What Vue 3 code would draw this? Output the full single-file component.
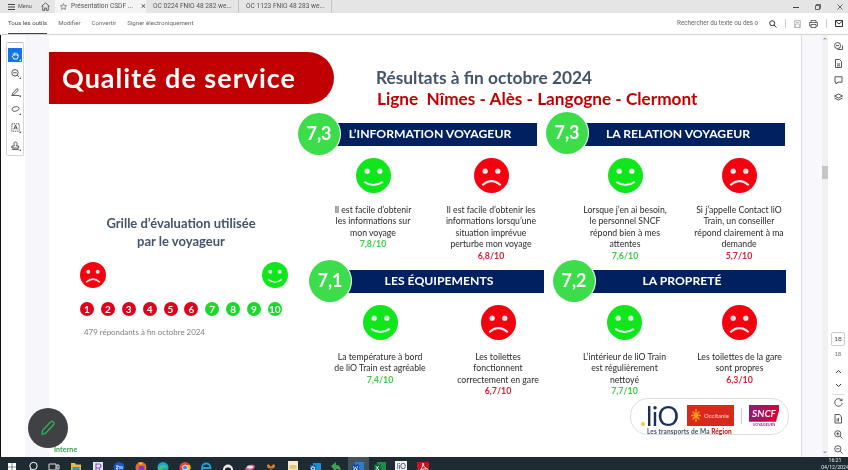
<script setup>
const scale = [1,2,3,4,5,6,7,8,9,10]
const sections = [
  { id: 's1', score: '7,3', title: 'L’INFORMATION VOYAGEUR', cards: [
    { mood: 'happy', lines: ['Il est facile d’obtenir','les informations sur','mon voyage'], note: '7,8/10' },
    { mood: 'sad', lines: ['Il est facile d’obtenir les','informations lorsqu’une','situation imprévue','perturbe mon voyage'], note: '6,8/10' } ] },
  { id: 's2', score: '7,3', title: 'LA RELATION VOYAGEUR', cards: [
    { mood: 'happy', lines: ['Lorsque j’en ai besoin,','le personnel SNCF','répond bien à mes','attentes'], note: '7,6/10' },
    { mood: 'sad', lines: ['Si j’appelle Contact liO','Train, un conseiller','répond clairement à ma','demande'], note: '5,7/10' } ] },
  { id: 's3', score: '7,1', title: 'LES ÉQUIPEMENTS', cards: [
    { mood: 'happy', lines: ['La température à bord','de liO Train est agréable'], note: '7,4/10' },
    { mood: 'sad', lines: ['Les toilettes','fonctionnent','correctement en gare'], note: '6,7/10' } ] },
  { id: 's4', score: '7,2', title: 'LA PROPRETÉ', cards: [
    { mood: 'happy', lines: ['L’intérieur de liO Train','est régulièrement','nettoyé'], note: '7,7/10' },
    { mood: 'sad', lines: ['Les toilettes de la gare','sont propres'], note: '6,3/10' } ] }
]
const leftTools = ['hand','zoom','pen','lasso','text','stamp']
</script>

<template>
  <div class="screen">
    <svg class="defs" width="0" height="0" aria-hidden="true">
      <symbol id="happy" viewBox="0 0 36 36">
        <circle cx="18" cy="18" r="18" fill="#10e61c"/>
        <circle cx="11.5" cy="13.5" r="2.7" fill="#e4fbe6"/>
        <circle cx="24.5" cy="13.5" r="2.7" fill="#e4fbe6"/>
        <path d="M8.5 24.5Q18 31 27.5 24.5" fill="none" stroke="#e4fbe6" stroke-width="2.1"/>
      </symbol>
      <symbol id="sad" viewBox="0 0 36 36">
        <circle cx="18" cy="18" r="18" fill="#f5000f"/>
        <circle cx="11.5" cy="13.5" r="2.7" fill="#fde6e6"/>
        <circle cx="24.5" cy="13.5" r="2.7" fill="#fde6e6"/>
        <path d="M8.5 28Q18 19.5 27.5 28" fill="none" stroke="#fde6e6" stroke-width="2.1"/>
      </symbol>
    </svg>

    <header class="tabbar">
      <div class="menu">
        <svg width="7" height="6" viewBox="0 0 7 6"><path d="M0 .5h7M0 3h7M0 5.5h7" stroke="#444" fill="none"/></svg>
        <span>Menu</span>
      </div>
      <svg class="home" width="9" height="9" viewBox="0 0 9 9"><path d="M.5 4.5 4.5.8l4 3.7M1.7 3.8V8.4h2V6h1.6v2.4h2V3.8" fill="none" stroke="#444" stroke-width=".8"/></svg>
      <div class="tab active">
        <svg width="7" height="7" viewBox="0 0 10 10"><path d="M5 .8 6.3 3.7l3.1.3-2.3 2.1.7 3.1L5 7.6 2.2 9.2l.7-3.1L.6 4l3.1-.3z" fill="none" stroke="#555" stroke-width=".9"/></svg>
        <span class="tab-name">Présentation CSDF ...</span>
        <span class="tab-x">×</span>
      </div>
      <div class="tab">OC 0224 FNIO 48 282 we...</div>
      <div class="tab">OC 1123 FNIO 48 283 we...</div>
      <div class="win">
        <svg width="6" height="6" viewBox="0 0 6 6"><path d="M0 3.5h6" stroke="#444"/></svg>
        <svg width="6" height="6" viewBox="0 0 6 6"><path d="M.5 1.5h4v4h-4zM1.5 1.5V.5h4v4h-1" fill="none" stroke="#444" stroke-width=".8"/></svg>
        <svg width="6" height="6" viewBox="0 0 6 6"><path d="m.5.5 5 5m0-5-5 5" stroke="#444" stroke-width=".8"/></svg>
      </div>
    </header>

    <nav class="toolbar">
      <span class="tool-link current">Tous les outils</span>
      <span class="tool-link">Modifier</span>
      <span class="tool-link">Convertir</span>
      <span class="tool-link">Signer électroniquement</span>
      <div class="tool-right">
        <span class="search">Rechercher du texte ou des o</span>
        <svg width="8" height="8" viewBox="0 0 8 8"><circle cx="3.2" cy="3.2" r="2.5" fill="none" stroke="#333"/><path d="m5 5 2.5 2.5" stroke="#333"/></svg>
        <i class="sep"></i>
        <svg width="7" height="8" viewBox="0 0 7 8"><path d="M.5.5h6v7h-6zM1.5 4h4v3.5h-4zM2 .5v2h3v-2" fill="none" stroke="#aaa" stroke-width=".7"/></svg>
        <svg width="9" height="8" viewBox="0 0 9 8"><path d="M2 2.5V.5h5v2M2 6H.5V2.5h8V6H7M2 4.5h5v3H2z" fill="none" stroke="#444" stroke-width=".8"/></svg>
        <i class="sep"></i>
        <svg width="8" height="7" viewBox="0 0 8 7"><path d="M.5.5h7v6h-7zM.5 1l3.5 3 3.5-3" fill="none" stroke="#333"/></svg>
      </div>
    </nav>

    <div class="main">
      <aside class="left-rail">
        <div class="tool-strip">
          <span v-for="t in leftTools" :key="t" class="lt" :class="{ on: t === 'hand' }">
            <svg width="9" height="9" viewBox="0 0 9 9" fill="none" :stroke="t === 'hand' ? '#fff' : '#444'" stroke-width=".9">
              <path v-if="t === 'hand'" d="M2.2 5V2.6m1.4 2V1.6m1.4 3V1.6m1.4 3.2V2.6M1.2 5l1.6 3h3.4l1-2.5V3.6"/>
              <template v-else-if="t === 'zoom'"><circle cx="4" cy="3.8" r="3.2"/><path d="M2.2 3.8h3.6M6.2 6.2 8 8"/></template>
              <path v-else-if="t === 'pen'" d="m1.5 6.5 4.5-5 1.4 1.3-4.6 5H1.3zM.5 8.6h8"/>
              <path v-else-if="t === 'lasso'" d="M1 4c0-2 6-3.500 7-1 .6 2-3 3.500-5 3.300C1.500 6 1 5 1 4z"/>
              <template v-else-if="t === 'text'"><path d="M.8.8h7.400v7.400H.8z" stroke-dasharray="1.2 .8"/><path d="m2.800 6.500 1.700-4.500 1.700 4.500M3.500 5h2"/></template>
              <path v-else d="M3 3.500a1.700 1.700 0 1 1 3 0l-.4 1.500h2v2H.9V5h2.500zM.9 8.400h7"/>
            </svg>
            <b></b>
          </span>
        </div>
      </aside>

      <main class="slide">
        <div class="slide-head">
          <div class="banner">Qualité de service</div>
          <div class="headline">
            <h2>Résultats à fin octobre 2024</h2>
            <h1>Ligne&nbsp; Nîmes - Alès - Langogne - Clermont</h1>
          </div>
        </div>

        <div class="slide-body">
          <section class="legend">
            <h3>Grille d’évaluation utilisée<br>par le voyageur</h3>
            <div class="legend-faces">
              <svg width="26" height="26"><use href="#sad"/></svg>
              <svg width="26" height="26"><use href="#happy"/></svg>
            </div>
            <div class="legend-scale">
              <span v-for="n in scale" :key="n" class="num" :class="n > 6 ? 'good' : 'bad'">{{ n }}</span>
            </div>
            <p class="respondents">479 répondants à fin octobre 2024</p>
          </section>

          <div class="results">
            <section v-for="s in sections" :key="s.id" class="block" :class="s.id">
              <div class="block-head">
                <span class="score">{{ s.score }}</span>
                <h4>{{ s.title }}</h4>
              </div>
              <div class="cards">
                <article v-for="c in s.cards" :key="c.note" class="card">
                  <svg width="35" height="35"><use :href="'#' + c.mood"/></svg>
                  <p class="desc"><span v-for="l in c.lines" :key="l">{{ l }}</span></p>
                  <strong :class="c.mood">{{ c.note }}</strong>
                </article>
              </div>
              <div v-if="s.id === 's4'" class="brand">
                <div class="brand-row">
                  <span class="lio"><i></i>liO</span>
                  <span class="occitanie">
                    <svg width="12" height="15" viewBox="0 0 12 15"><path d="M6 1v13M1 7.500h10M2.500 3.500l7 8m0-8-7 8" stroke="#f7a11a" stroke-width="1.300"/></svg>
                    <em>Occitanie</em>
                  </span>
                  <i class="brand-sep"></i>
                  <span class="sncf"><b>SNCF</b><small>VOYAGEURS</small></span>
                </div>
                <p class="brand-line">Les transports de Ma <span>Région</span></p>
              </div>
            </section>
          </div>
        </div>
        <div class="tag">Interne</div>
      </main>

      <aside class="side-rail">
        <div class="scrollbar">
          <span class="arrow">⌃</span>
          <i class="thumb"></i>
          <span class="arrow down">⌄</span>
        </div>
      </aside>

      <aside class="right-tools">
        <div class="rt-top">
          <svg width="9" height="9" viewBox="0 0 9 9" fill="none" stroke="#444" stroke-width=".9"><circle cx="3.600" cy="3.600" r="3"/><path d="M2 3.600h3M3.500 7.500h5v-4"/></svg>
          <svg width="9" height="9" viewBox="0 0 9 9" fill="none" stroke="#444" stroke-width=".9"><path d="M1.500.5h4l2 2v6h-6zM3 5h3M3 6.800h3"/></svg>
          <svg width="9" height="9" viewBox="0 0 9 9" fill="none" stroke="#444" stroke-width=".9"><path d="M1 .8h7v5.400H4L2 8V6.200H1z"/></svg>
          <svg width="9" height="9" viewBox="0 0 9 9" fill="none" stroke="#444" stroke-width=".9"><path d="M4.500 1 8.500 3l-4 2-4-2zM.5 5l4 2 4-2"/></svg>
        </div>
        <div class="rt-bottom">
          <span class="page">18</span>
          <span class="page-total">18</span>
          <svg class="up" width="7" height="5" viewBox="0 0 7 5"><path d="m1 4 2.500-2.500L6 4" fill="none" stroke="#333"/></svg>
          <svg class="dn" width="7" height="5" viewBox="0 0 7 5"><path d="m1 1 2.500 2.500L6 1" fill="none" stroke="#333"/></svg>
          <i class="rt-sep"></i>
          <svg class="rot" width="9" height="9" viewBox="0 0 9 9"><path d="M7.800 2.500A3.800 3.800 0 1 0 8.300 5M8 .5v2.200H5.800" fill="none" stroke="#333" stroke-width=".8"/></svg>
          <svg class="pg" width="9" height="10" viewBox="0 0 9 10"><path d="M1 .5h4.500L7.500 3v6H1zM3 4.500v3M4.500 4v3.500" fill="none" stroke="#333" stroke-width=".8"/></svg>
          <svg class="zi" width="9" height="9" viewBox="0 0 9 9"><circle cx="3.800" cy="3.800" r="3.100" fill="none" stroke="#333" stroke-width=".8"/><path d="M2.200 3.800h3.200M3.800 2.200v3.200M6.200 6.200 8.500 8.500" stroke="#333" stroke-width=".8"/></svg>
          <svg class="zo" width="9" height="9" viewBox="0 0 9 9"><circle cx="3.800" cy="3.800" r="3.100" fill="none" stroke="#333" stroke-width=".8"/><path d="M2.200 3.800h3.200M6.200 6.200 8.500 8.500" stroke="#333" stroke-width=".8"/></svg>
        </div>
      </aside>
    </div>

    <footer class="taskbar">
      <div class="task-icons">
        <svg width="10" height="10" viewBox="0 0 10 10"><path d="M1 2h3.700v3.700H1zM5.300 2H9v3.700H5.300zM1 6.300h3.700V10H1zM5.300 6.300H9V10H5.300z" fill="#fff"/></svg>
        <svg width="12" height="12" viewBox="0 0 12 12"><circle cx="6.500" cy="5" r="3.700" fill="none" stroke="#fff"/><path d="M4 8 1.500 11" stroke="#fff"/></svg>
        <svg width="12" height="12" viewBox="0 0 12 12"><path d="M1 3h7v6H1zM9 4h2v4H9z" fill="none" stroke="#ddd"/></svg>
        <svg width="12" height="12" viewBox="0 0 12 12"><path d="M1 2h4l1 1.500h5V12H1z" fill="#e9b949"/><path d="M2.500 6h7v6h-7z" fill="#4a90c2"/></svg>
        <svg width="12" height="12" viewBox="0 0 12 12"><path d="M1 1h10v11H1z" fill="#e6e4f5"/><path d="M4 3h3a2 2 0 0 1 0 4H4zm0 4v4m3-4 2 4" fill="none" stroke="#8254c8" stroke-width="1.200"/></svg>
        <svg width="12" height="12" viewBox="0 0 12 12"><circle cx="6" cy="6.500" r="5.500" fill="#1658c9"/><path d="M3 5h2.500L3 8h2.500M7 8V5m2 3V5" stroke="#fff" stroke-width=".9" fill="none"/></svg>
        <svg width="12" height="12" viewBox="0 0 12 12"><circle cx="6" cy="6.500" r="5.500" fill="#e8692a"/><circle cx="6.500" cy="7.500" r="2.800" fill="#7a3cc8"/><path d="M3 1.500 6 4 8 1.500" fill="#f7c32b"/></svg>
        <svg width="12" height="12" viewBox="0 0 12 12"><circle cx="6" cy="6.500" r="5.500" fill="#1b9dd9"/><path d="M1 8c1-5 8-6 10-1H5c0 2.500 3 3.500 5 2.500-3 3-8 2-9-1.500z" fill="#39c67c"/></svg>
        <svg width="12" height="12" viewBox="0 0 12 12"><circle cx="6" cy="6.500" r="5.500" fill="#e94335"/><path d="M6 6.500 1.500 9A5.500 5.500 0 0 0 8 11.600z" fill="#33a853"/><path d="M6 6.500 8 11.600A5.500 5.500 0 0 0 11 4H6z" fill="#fbbc04"/><circle cx="6" cy="6.500" r="2.400" fill="#4285f4" stroke="#fff" stroke-width=".8"/></svg>
        <svg width="12" height="12" viewBox="0 0 12 12"><path d="M2.500 7h8C10.500 1 2 1 2 7s6 6 8.500 3" fill="none" stroke="#1fa0e3" stroke-width="1.800"/></svg>
        <svg width="12" height="12" viewBox="0 0 12 12"><path d="M1 12V8c1-6 9-6 10 0v4z" fill="#e8e8e8"/><path d="M3 8c1-2 5-2 6 0v4H3z" fill="#222"/></svg>
        <svg width="12" height="12" viewBox="0 0 12 12"><path d="M1 8c2-5 8-5 10-3-1 4-6 7-10 3z" fill="#e05a84"/><ellipse cx="6" cy="6" rx="3" ry="1.500" fill="#dfe6f5"/></svg>
        <svg width="12" height="12" viewBox="0 0 12 12"><path d="M6 6C4 2 2 3 2 5s2 3 4 2c-1 2-2 4 0 5 2-1 1-3 0-5 2 1 4 0 4-2s-2-3-4 1z" fill="#e57a1f"/></svg>
        <svg width="12" height="12" viewBox="0 0 12 12"><path d="M1 0h10v12H1z" fill="#f4ecd0"/><path d="M2.500 5h7M2.500 7h7" stroke="#d4a52b"/></svg>
        <svg width="12" height="12" viewBox="0 0 12 12"><path d="M4 2h8v10H4z" fill="#1b8fd6"/><path d="M1 4h6v7H1z" fill="#0f5fa8"/><circle cx="4" cy="7.500" r="1.700" fill="none" stroke="#fff"/></svg>
        <svg width="12" height="12" viewBox="0 0 12 12"><path d="M1 5 6 1v3c4 0 5 3 5 8-1-3-2-4-5-4v3z" fill="#3fa34d"/></svg>
        <span class="word"><svg width="12" height="12" viewBox="0 0 12 12"><path d="M3 1h9v11H3z" fill="#2b7cd3"/><path d="M0 3.500h7v7H0z" fill="#164f99"/><path d="m1.500 5 .8 4 1.200-3 1.200 3 .8-4" stroke="#fff" stroke-width=".6" fill="none"/></svg></span>
        <svg width="12" height="12" viewBox="0 0 12 12"><path d="M3 1h9v11H3z" fill="#1f8a50"/><path d="M0 3.500h7v7H0z" fill="#0f6a38"/><path d="m1.800 5 3 4m0-4-3 4" stroke="#fff" stroke-width=".8"/></svg>
        <span class="lio-app">liO</span>
        <svg width="12" height="12" viewBox="0 0 12 12"><path d="M0 1h12v11H0z" fill="#c8141e"/><path d="M2 10c3-2 4-5 4-8 0 3 2 5 4.500 6-3-.5-6 0-8.500 2z" fill="none" stroke="#fff" stroke-width=".9"/></svg>
      </div>
      <div class="clock"><span>16:21</span><span>04/12/2024</span></div>
    </footer>

    <button class="fab" type="button" aria-label="Annoter">
      <svg width="18" height="18" viewBox="0 0 18 18"><path d="M3.500 11.500 11.500 3a2 2 0 0 1 3 2.800L6.500 14.300l-3.300.8z" fill="none" stroke="#2fb457" stroke-width="1.300"/></svg>
    </button>
  </div>
</template>

<style scoped>
.screen { position: relative; width: 848px; height: 470px; overflow: hidden; display: flex; flex-direction: column; background: #fff; font-family: "Lato", "Liberation Sans", sans-serif; color: #333; filter: blur(.3px); }
.defs { position: absolute; }
p, h1, h2, h3, h4 { margin: 0; }

.tabbar { height: 13px; flex: none; display: flex; align-items: center; background: #e5e5e5; font: 6.600px/13px "Roboto", sans-serif; color: #555; }
.menu { width: 38px; padding-left: 8px; display: flex; align-items: center; gap: 3px; box-sizing: border-box; font-size: 5.500px; }
.home { margin: 0 5px 0 3px; }
.tab { width: 93px; padding-left: 7px; box-sizing: border-box; border-right: 1px solid #c4c4c4; white-space: nowrap; overflow: hidden; }
.tab.active { width: 91px; padding-left: 5px; margin-right: 0; background: #f4f4f4; display: flex; align-items: center; gap: 4px; border: 0; }
.tab-name { flex: none; width: 66px; white-space: nowrap; }
.tab-x { font-size: 9px; }
.win { margin-left: auto; padding-right: 5px; display: flex; gap: 16px; }

.toolbar { height: 21px; flex: none; display: flex; align-items: stretch; padding-left: 8px; border-bottom: 1px solid #d2d2d2; font: 6.100px/19px "Roboto", sans-serif; color: #666; gap: 11px; box-sizing: content-box; }
.tool-link { box-sizing: border-box; height: 21px; white-space: nowrap; }
.tool-link.current { border-bottom: 1px solid #444; color: #444; }
.tool-right { margin-left: auto; padding-right: 5px; display: flex; align-items: center; gap: 8px; }
.search { margin-right: 1px; width: 83px; font-size: 6.300px; white-space: nowrap; }
.sep { width: 1px; height: 9px; background: #ccc; }

.main { flex: 1; min-height: 0; display: flex; }
.left-rail { width: 49px; flex: none; box-sizing: border-box; border-left: 1px solid #111; background: linear-gradient(90deg, #fff 0 24px, #f7f6fa 24px); padding: 7px 0 0 5px; }
.tool-strip { width: 18px; box-sizing: border-box; padding: 5px 1px 3px; border: 1px solid #d6d6d6; border-top-color: #bbb; background: #fff; border-radius: 2px; display: flex; flex-direction: column; gap: 4px; }
.lt { position: relative; height: 14px; display: flex; align-items: center; justify-content: center; }
.lt.on { background: #1473e6; }
.lt b { position: absolute; right: 1px; bottom: 1px; border-left: 2px solid transparent; border-bottom: 2px solid #555; }
.lt.on b { border-bottom-color: #fff; }

.slide { width: 752px; flex: none; position: relative; display: flex; flex-direction: column; background: #fff; }
.slide-head { display: flex; height: 77px; padding-top: 17px; box-sizing: border-box; }
.banner { width: 285px; height: 52px; flex: none; box-sizing: border-box; padding: 9px 0 0 13px; background: #c00000; border-radius: 0 26px 26px 0; color: #fff; font-size: 27px; line-height: 34px; font-weight: 700; letter-spacing: 1px; white-space: nowrap; }
.headline { margin-left: 42px; padding-top: 16px; white-space: nowrap; }
.headline h2 { font-size: 17.300px; line-height: 20px; color: #44546a; font-weight: 700; }
.headline h1 { margin: 0 0 0 1px; font-size: 17.200px; line-height: 22px; color: #c00000; font-weight: 700; }

.slide-body { display: flex; height: 334px; }
.legend { width: 249px; flex: none; padding-left: 31px; box-sizing: border-box; }
.legend h3 { width: 202px; margin-top: 102px; text-align: center; font-size: 13px; line-height: 18px; font-weight: 700; color: #44546a; white-space: nowrap; }
.legend-faces { width: 208px; margin-top: 12px; display: flex; justify-content: space-between; }
.legend-faces svg { display: block; }
.legend-scale { width: 202px; margin-top: 14px; display: flex; justify-content: space-between; }
.num { width: 14px; height: 14px; border-radius: 50%; color: #fff; font-size: 10px; line-height: 14px; font-weight: 700; text-align: center; }
.num.bad { background: #e0001a; }
.num.good { background: #19d92b; }
.respondents { margin: 11px 0 0 4px; font-size: 7.900px; line-height: 10px; color: #808080; white-space: nowrap; }

.results { display: grid; grid-template-columns: 248px 248px; grid-template-rows: 147px 1fr; }
.block { --inset: 16px; --col: 118px; --shift: 0px; margin-left: var(--shift); min-width: 0; }
.s2 { --inset: 22px; --col: 114px; }
.s3 { --inset: 12px; --col: 118px; --shift: 11px; }
.s4 { --inset: 14px; --col: 115px; --shift: 7px; }
.block-head { height: 43px; display: flex; align-items: center; }
.score { position: relative; z-index: 1; width: 42px; height: 42px; flex: none; border-radius: 50%; background: #3ddc4b; box-shadow: 0 0 0 1px #fff; color: #fff; font-size: 18px; line-height: 40px; font-weight: 700; text-align: center; }
.s2 .score { margin-bottom: 2px; }
.block-head h4 { height: 23px; margin: 2px 0 0 -3px; padding: 0 14px 0 0; box-sizing: border-box; background: #002060; color: #fff; font-size: 12.200px; line-height: 22px; font-weight: 700; text-align: center; white-space: nowrap; }
.s1 h4, .s2 h4 { width: 200px; }
.s3 h4 { width: 196px; }
.s4 h4 { width: 194px; }
.cards { display: flex; padding: 3px 0 0 var(--inset); }
.card { width: var(--col); flex: none; display: flex; flex-direction: column; align-items: center; text-align: center; }
.card svg { display: block; flex: none; }
.desc { margin-top: 11px; font-size: 8.700px; line-height: 11.400px; color: #2b2b2b; white-space: nowrap; }
.desc span { display: block; }
.card strong { font-size: 8.800px; line-height: 11.400px; font-weight: 700; }
strong.happy { color: #35cf45; }
strong.sad { color: #d3203a; }

.brand { width: 159px; height: 37px; box-sizing: border-box; margin: 1px 0 0 77px; padding: 6px 0 0 8px; border: 1px solid #ddd; border-radius: 18px; background: #fff; }
.brand-row { display: flex; align-items: flex-start; height: 23px; }
.lio { position: relative; width: 48px; padding-left: 7px; box-sizing: border-box; font-size: 27px; line-height: 22px; color: #1a2e5a; letter-spacing: -.5px; }
.lio i { position: absolute; left: 2px; bottom: 1px; width: 4px; height: 4px; border-radius: 50%; background: #f2d12e; }
.occitanie { width: 47px; height: 21px; flex: none; background: #d8291c; display: flex; align-items: center; gap: 2px; padding-left: 3px; box-sizing: border-box; }
.occitanie em { font-style: normal; font-size: 6px; color: #fbd9c8; }
.brand-sep { width: 1px; height: 16px; margin: 3px 7px 0; background: #ccc; }
.sncf { width: 30px; display: flex; flex-direction: column; align-items: center; }
.sncf b { width: 30px; height: 17px; background: linear-gradient(110deg, #8b1a7d, #e4002b); clip-path: polygon(0 0, 100% 0, 100% 35%, 90% 100%, 0 100%); color: #fff; font-size: 10px; line-height: 17px; font-style: italic; text-align: center; }
.sncf small { font-size: 3.500px; line-height: 6px; font-weight: 700; color: #8b1a7d; letter-spacing: .2px; }
.brand-line { margin: 0 0 0 8px; font-size: 6.500px; line-height: 8px; font-weight: 700; color: #44546a; white-space: nowrap; letter-spacing: .1px; }
.brand-line span { color: #c00000; }

.tag { margin: -1px 0 0 5px; font-size: 7px; line-height: 9px; color: #2e9e49; font-weight: 700; letter-spacing: .1px; }

.side-rail { width: 27px; flex: none; box-sizing: border-box; border-left: 1px solid #dcdcdc; background: #f8f7fb; display: flex; justify-content: flex-end; }
.scrollbar { position: relative; width: 6px; background: #f1f1f1; }
.arrow { position: absolute; left: 0; top: 2px; width: 6px; font-size: 7px; line-height: 7px; color: #666; text-align: center; }
.arrow.down { top: auto; bottom: 3px; }
.thumb { position: absolute; top: 131px; left: 0; width: 6px; height: 13px; background: #c6c6c6; }

.right-tools { flex: 1; display: flex; flex-direction: column; justify-content: space-between; align-items: center; background: #fff; }
.rt-top { padding-top: 7px; display: flex; flex-direction: column; gap: 8px; }
.rt-top svg, .rt-bottom svg { display: block; }
.rt-bottom { padding-bottom: 3.500px; display: flex; flex-direction: column; align-items: center; }
.page { width: 14px; height: 14px; box-sizing: border-box; border: 1px solid #ccc; border-radius: 2px; font-size: 6.500px; line-height: 12px; text-align: center; color: #444; }
.page-total { margin-top: 5px; font-size: 5.500px; line-height: 6px; color: #666; }
.up { margin-top: 11.500px; }
.dn { margin-top: 9px; }
.rt-sep { width: 12px; height: 1px; margin-top: 6px; background: #ddd; }
.rot { margin-top: 3px; }
.pg { margin-top: 7.500px; }
.zi { margin-top: 5.500px; }
.zo { margin-top: 6px; }

.taskbar { height: 13px; flex: none; display: flex; justify-content: space-between; background: #1e2b33; overflow: hidden; }
.task-icons { display: flex; align-items: flex-start; padding: 4px 0 0 7px; gap: 9.700px; }
.task-icons svg { display: block; flex: none; }
.word { width: 21px; height: 13px; margin: -4px -4.500px 0; background: #44525c; display: flex; justify-content: center; padding-top: 4px; box-sizing: border-box; }
.lio-app { width: 12px; height: 12px; background: #f2f2f2; color: #1a2e5a; font-size: 7px; line-height: 11px; text-align: center; }
.clock { width: 26px; display: flex; flex-direction: column; align-items: center; font: 5.200px/7px "Roboto", sans-serif; color: #e8e8e8; white-space: nowrap; }

.fab { position: absolute; left: 28px; top: 408px; width: 40px; height: 40px; padding: 0; border: 0; border-radius: 50%; background: #3f4145; display: flex; align-items: center; justify-content: center; }
</style>
